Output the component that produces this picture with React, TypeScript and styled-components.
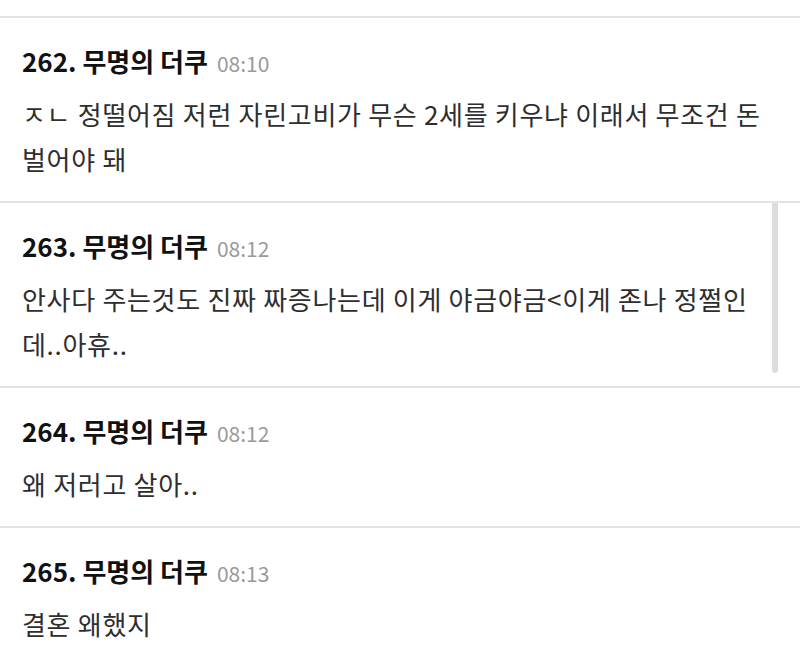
import React from "react";
import styled, { createGlobalStyle } from "styled-components";

const Global = createGlobalStyle`
  html, body { margin: 0; padding: 0; background: #ffffff; }
  body { font-family: "Noto Sans CJK KR", "Noto Sans", sans-serif; overflow: hidden; }
`;

const List = styled.div`
  display: flex;
  flex-direction: column;
  width: 800px;
`;

const PrevStub = styled.div`
  height: 16px;
  border-bottom: 2px solid #e4e4e4;
`;

const Post = styled.article`
  position: relative;
  display: flex;
  flex-direction: column;
  gap: 10px;
  padding: 23px 22px 20px;
  border-bottom: 2px solid #e4e4e4;
`;

const Header = styled.div`
  display: flex;
  align-items: baseline;
  gap: 9px;
  height: 40px;
  line-height: 40px;
`;

const Author = styled.span`
  font-size: 26px;
  font-weight: 700;
  color: #111111;
`;

const Time = styled.span`
  font-size: 21px;
  color: #9a9a9a;
`;

const Body = styled.p`
  margin: 0;
  font-size: 26px;
  letter-spacing: 0.7px;
  line-height: 45px;
  color: #2e2e2e;
`;

const ScrollThumb = styled.div`
  position: absolute;
  top: 0;
  right: 22px;
  width: 6px;
  height: 170px;
  border-radius: 0 0 3px 3px;
  background: #dcdcdc;
`;

type Item = { no: number; time: string; text: string; scroll?: boolean };

const items: Item[] = [
  { no: 262, time: "08:10", text: "ㅈㄴ 정떨어짐 저런 자린고비가 무슨 2세를 키우냐 이래서 무조건 돈 벌어야 돼" },
  { no: 263, time: "08:12", text: "안사다 주는것도 진짜 짜증나는데 이게 야금야금<이게 존나 정쩔인데..아휴..", scroll: true },
  { no: 264, time: "08:12", text: "왜 저러고 살아.." },
  { no: 265, time: "08:13", text: "결혼 왜했지" },
];

export default function App() {
  return (
    <>
      <Global />
      <List>
        <PrevStub />
        {items.map((it) => (
          <Post key={it.no}>
            <Header>
              <Author>{it.no}. 무명의 더쿠</Author>
              <Time>{it.time}</Time>
            </Header>
            <Body>{it.text}</Body>
            {it.scroll && <ScrollThumb />}
          </Post>
        ))}
      </List>
    </>
  );
}
